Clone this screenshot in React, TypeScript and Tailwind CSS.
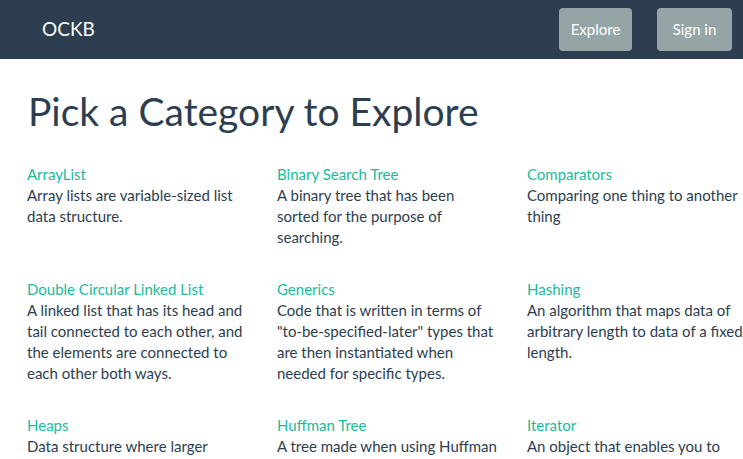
import React from "react";

const items = [
  { t: "ArrayList", d: "Array lists are variable-sized list data structure." },
  { t: "Binary Search Tree", d: "A binary tree that has been sorted for the purpose of searching." },
  { t: "Comparators", d: "Comparing one thing to another thing" },
  { t: "Double Circular Linked List", d: "A linked list that has its head and tail connected to each other, and the elements are connected to each other both ways." },
  { t: "Generics", d: "Code that is written in terms of \"to-be-specified-later\" types that are then instantiated when needed for specific types." },
  { t: "Hashing", d: "An algorithm that maps data of arbitrary length to data of a fixed length." },
  { t: "Heaps", d: "Data structure where larger elements are stored near the top." },
  { t: "Huffman Tree", d: "A tree made when using Huffman coding to compress data." },
  { t: "Iterator", d: "An object that enables you to traverse a container." },
];

export default function App() {
  return (
    <div className="w-[743px] h-[459px] overflow-hidden bg-white text-[#2c3e50]" style={{ fontFamily: "Lato, 'Liberation Sans', sans-serif" }}>
      <nav className="h-[59px] bg-[#2c3e50] flex items-center justify-between pl-[42px] pr-[11px]">
        <span className="text-white text-[19px]">OCKB</span>
        <div className="flex gap-[25px]">
          <button className="h-[43px] w-[73px] rounded-[4px] bg-[#95a5a6] text-white text-[15px]">Explore</button>
          <button className="h-[43px] w-[75px] rounded-[4px] bg-[#95a5a6] text-white text-[15px]">Sign in</button>
        </div>
      </nav>
      <div className="pl-[27px]">
        <h1 className="text-[39px] leading-[43px] mt-[31px] mb-[31px] font-normal pl-[1px]">Pick a Category to Explore</h1>
        <div className="grid grid-cols-[250px_250px_250px] gap-y-[31px] w-[750px]">
          {items.map((it) => (
            <div key={it.t} className="w-[220px] text-[15px] leading-[21px]">
              <div className="text-[#18bc9c]">{it.t}</div>
              <div>{it.d}</div>
            </div>
          ))}
        </div>
      </div>
    </div>
  );
}
